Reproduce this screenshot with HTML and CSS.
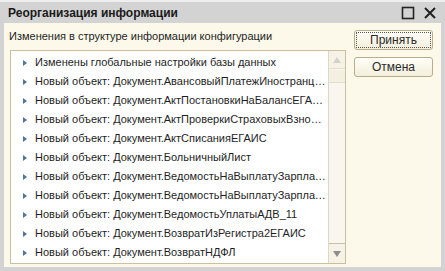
FILE: index.html
```html
<!DOCTYPE html>
<html lang="ru">
  <head>
    <meta charset="utf-8">
    <title>Реорганизация информации</title>
    <link rel="stylesheet" href="styles.css">
  </head>
  <body>
    <div class="window">
      <div class="titlebar">
        <span class="title">Реорганизация информации</span>
        <span class="controls">
          <svg width="14" height="14" viewBox="0 0 14 14"><rect x="1.5" y="1.5" width="11" height="11" fill="none" stroke="#222" stroke-width="1.6"/></svg>
          <svg width="14" height="14" viewBox="0 0 14 14"><path d="M2 2 L12 12 M12 2 L2 12" stroke="#222" stroke-width="2"/></svg>
        </span>
      </div>
      <div class="content">
        <div class="main">
          <div class="caption">Изменения в структуре информации конфигурации</div>
          <div class="list">
            <ul class="rows">
              <li>Изменены глобальные настройки базы данных</li>
              <li>Новый объект: Документ.АвансовыйПлатежИностранцаПоНДФЛ</li>
              <li>Новый объект: Документ.АктПостановкиНаБалансЕГАИС</li>
              <li>Новый объект: Документ.АктПроверкиСтраховыхВзносов</li>
              <li>Новый объект: Документ.АктСписанияЕГАИС</li>
              <li>Новый объект: Документ.БольничныйЛист</li>
              <li>Новый объект: Документ.ВедомостьНаВыплатуЗарплатыВБанк</li>
              <li>Новый объект: Документ.ВедомостьНаВыплатуЗарплатыВКассу</li>
              <li>Новый объект: Документ.ВедомостьУплатыАДВ_11</li>
              <li>Новый объект: Документ.ВозвратИзРегистра2ЕГАИС</li>
              <li>Новый объект: Документ.ВозвратНДФЛ</li>
            </ul>
            <div class="scrollbar">
              <div class="arrow up"></div>
              <div class="thumb"></div>
              <div class="track"></div>
              <div class="arrow down"></div>
            </div>
          </div>
        </div>
        <div class="buttons">
          <button class="btn default">Принять</button>
          <button class="btn">Отмена</button>
        </div>
      </div>
    </div>
  </body>
</html>
```

FILE: styles.css
```css
body {
  margin: 0;
  font-family: "Liberation Sans", Arial, sans-serif;
  color: #1e1e1e;
}

.window {
  width: 445px;
  height: 271px;
  box-sizing: border-box;
  background: #d3d3d3;
  border-top: 2px solid #efefef;
  display: flex;
  flex-direction: column;
}

.titlebar {
  height: 21px;
  display: flex;
  align-items: center;
  justify-content: space-between;
  padding: 0 8px 0 8px;
}

.title {
  font-weight: bold;
  font-size: 12px;
  color: #1a1a1a;
}

.controls {
  display: flex;
  gap: 8px;
  padding-top: 1px;
}

.content {
  flex: 1;
  margin: 0 4px 4px 4px;
  background: #fcf9ea;
  display: flex;
  padding: 6px 8px 3px 6px;
  gap: 8px;
}

.main {
  width: 336px;
  display: flex;
  flex-direction: column;
}

.caption {
  font-size: 11px;
  line-height: 14px;
  margin-left: -1px;
  height: 21px;
}

.list {
  flex: 1;
  border: 1px solid #c8c0a0;
  background: #fff;
  display: flex;
  overflow: hidden;
}

.rows {
  flex: 1;
  list-style: none;
  margin: 0;
  padding: 2px 0 0 0;
  min-width: 0;
}

.rows li {
  height: 19px;
  line-height: 19px;
  font-size: 11px;
  white-space: nowrap;
  overflow: hidden;
  text-overflow: ellipsis;
  padding-left: 24px;
  padding-right: 1px;
  position: relative;
}

.rows li::before {
  content: "";
  position: absolute;
  left: 12px;
  top: 7px;
  border-left: 4px solid #50739a;
  border-top: 3px solid transparent;
  border-bottom: 3px solid transparent;
}

.scrollbar {
  width: 16px;
  border-left: 1px solid #ddd8c4;
  background: #f8f6ee;
  display: flex;
  flex-direction: column;
}

.arrow {
  height: 17px;
  background: #f6f3e6;
  border-bottom: 1px solid #e3dfcc;
  position: relative;
}

.arrow.down {
  border-bottom: none;
  border-top: 1px solid #c8c0a0;
  height: 19px;
}

.arrow::after {
  content: "";
  position: absolute;
  left: 4px;
  border-left: 4px solid transparent;
  border-right: 4px solid transparent;
}

.arrow.up::after {
  top: 6px;
  border-bottom: 6px solid #d2d2cc;
}

.arrow.down::after {
  top: 7px;
  border-top: 6px solid #8c8c8c;
}

.thumb {
  height: 12px;
  margin-top: 1px;
  background: #f3f0e2;
  border-bottom: 1px solid #e3dfcc;
}

.track {
  flex: 1;
}

.buttons {
  display: flex;
  flex-direction: column;
  gap: 7px;
  padding-top: 1px;
}

.btn {
  width: 79px;
  height: 20px;
  font-family: "Liberation Sans", Arial, sans-serif;
  font-size: 12px;
  color: #2a2a2a;
  border: 1px solid #b8ae8a;
  border-radius: 3px;
  background: linear-gradient(#fffef8, #f3eedb);
  padding: 0;
}

.btn.default {
  outline: 1px dotted #555;
  outline-offset: -3px;
}
```
